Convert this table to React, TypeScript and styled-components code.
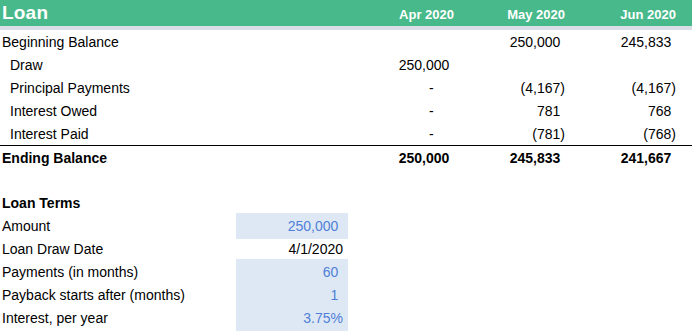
import React from 'react'
import styled, { createGlobalStyle } from 'styled-components'

const GlobalStyle = createGlobalStyle`
  html, body {
    margin: 0;
    padding: 0;
    background: #ffffff;
  }
  body {
    font-family: 'Liberation Sans', Arial, sans-serif;
    font-size: 14px;
    color: #000000;
  }
`

const Sheet = styled.div`
  width: 692px;
  height: 331px;
  overflow: hidden;
`

const HeaderBar = styled.div`
  display: grid;
  grid-template-columns: 346px 111px 111px 111px 1fr;
  height: 26px;
  background: #47b98a;
  color: #ffffff;
  font-weight: bold;
  border-bottom: 4px solid #dadfe7;
`

const Title = styled.div`
  font-size: 19px;
  line-height: 26px;
  padding-left: 2px;
  letter-spacing: 0.2px;
`

const MonthHead = styled.div`
  font-size: 13px;
  line-height: 30px;
  text-align: right;
  padding-right: 3px;
`

const Row = styled.div<{ $bold?: boolean; $topRule?: boolean }>`
  display: grid;
  grid-template-columns: 346px 111px 111px 111px 1fr;
  height: 23px;
  line-height: 24px;
  font-weight: ${p => (p.$bold ? 'bold' : 'normal')};
  border-top: ${p => (p.$topRule ? '1px solid #000' : 'none')};
  box-sizing: border-box;
`

const Label = styled.div<{ $indent?: boolean }>`
  padding-left: ${p => (p.$indent ? '10px' : '2px')};
  white-space: nowrap;
`

const Num = styled.div`
  text-align: right;
  padding-right: 3px;
  white-space: nowrap;
`

const Pad = styled.span`
  visibility: hidden;
`

const Spacer = styled.div`
  height: 23px;
`

const TermsTitle = styled.div`
  height: 22px;
  line-height: 24px;
  font-weight: bold;
  padding-left: 2px;
`

const TermRow = styled.div`
  display: grid;
  grid-template-columns: 236px 112px;
  height: 23px;
  line-height: 26px;
`

const TermValue = styled.div<{ $input?: boolean }>`
  text-align: right;
  padding-right: 5px;
  background: ${p => (p.$input ? '#dee8f5' : 'transparent')};
  color: ${p => (p.$input ? '#4f7fd6' : '#000000')};
  white-space: nowrap;
`

type Cell = number | null | undefined

// accounting style: positives keep room for a ")", zero shows a dash
const Amount: React.FC<{ v: Cell }> = ({ v }) => {
  if (v === undefined) return <Num />
  if (v === null || v === 0)
    return (
      <Num>
        -<Pad>00)</Pad>
      </Num>
    )
  const s = Math.abs(v).toLocaleString('en-US')
  if (v < 0) return <Num>({s})</Num>
  return (
    <Num>
      {s}
      <Pad>)</Pad>
    </Num>
  )
}

const rows: { label: string; indent?: boolean; values: Cell[] }[] = [
  { label: 'Beginning Balance', values: [undefined, 250000, 245833] },
  { label: 'Draw', indent: true, values: [250000, undefined, undefined] },
  { label: 'Principal Payments', indent: true, values: [0, -4167, -4167] },
  { label: 'Interest Owed', indent: true, values: [0, 781, 768] },
  { label: 'Interest Paid', indent: true, values: [0, -781, -768] },
]

const terms: { label: string; value: string; input?: boolean; num?: boolean }[] = [
  { label: 'Amount', value: '250,000', input: true, num: true },
  { label: 'Loan Draw Date', value: '4/1/2020' },
  { label: 'Payments (in months)', value: '60', input: true, num: true },
  { label: 'Payback starts after (months)', value: '1', input: true, num: true },
  { label: 'Interest, per year', value: '3.75%', input: true },
]

const App: React.FC = () => {
  return (
    <Sheet>
      <GlobalStyle />
      <HeaderBar>
        <Title>Loan</Title>
        <MonthHead>Apr 2020</MonthHead>
        <MonthHead>May 2020</MonthHead>
        <MonthHead>Jun 2020</MonthHead>
      </HeaderBar>

      {rows.map(r => (
        <Row key={r.label}>
          <Label $indent={r.indent}>{r.label}</Label>
          {r.values.map((v, i) => (
            <Amount key={i} v={v} />
          ))}
        </Row>
      ))}

      <Row $bold $topRule>
        <Label>Ending Balance</Label>
        <Amount v={250000} />
        <Amount v={245833} />
        <Amount v={241667} />
      </Row>

      <Spacer />
      <TermsTitle>Loan Terms</TermsTitle>
      {terms.map(t => (
        <TermRow key={t.label}>
          <Label>{t.label}</Label>
          <TermValue $input={t.input}>
            {t.value}
            {t.num && <Pad>)</Pad>}
          </TermValue>
        </TermRow>
      ))}
    </Sheet>
  )
}

export default App
